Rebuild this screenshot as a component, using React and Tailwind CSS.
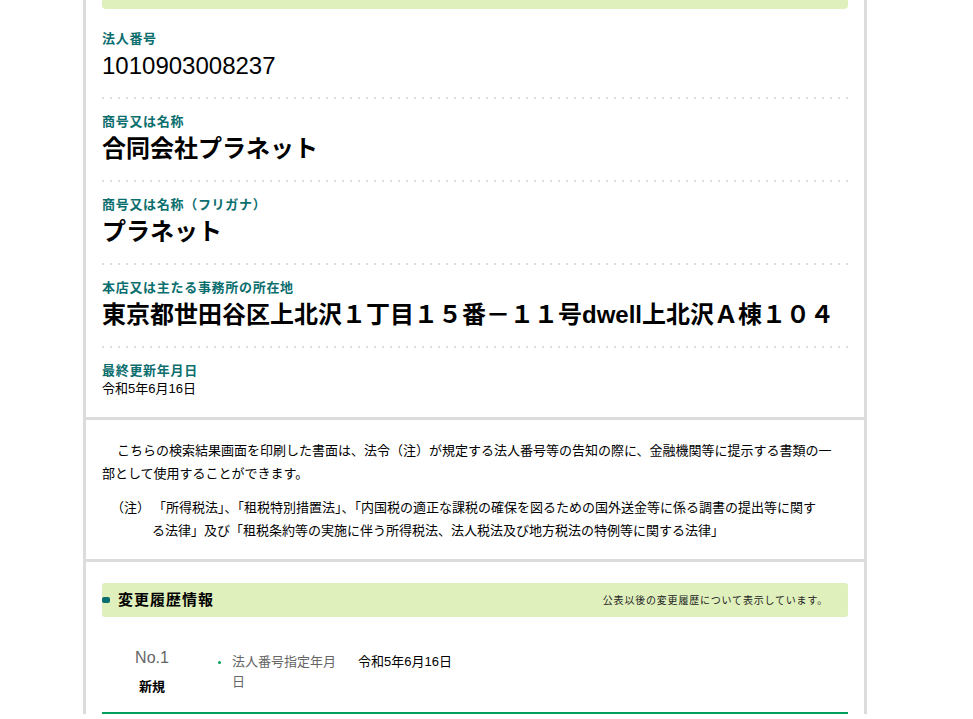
import React from "react";

const jp = { fontFamily: '"Liberation Sans", "Noto Sans CJK JP", sans-serif' };

const Dots = () => (
  <div className="h-[2px] bg-[linear-gradient(to_right,#dcdcdc_2px,transparent_2px)] bg-[length:8px_2px]" />
);

const Item = ({ label, value, big = true, bold = false, first = false, last = false }) => (
  <div>
    <div className={first ? "pt-[21px]" : "pt-[14px]"}>
      <div className="text-[13px] leading-[18px] font-bold tracking-[0.7px] text-[#0b6e6e]">{label}</div>
      {big ? (
        <div className={`mt-[2px] text-[24px] leading-[32px] text-black ${bold ? "font-bold" : ""}`}>{value}</div>
      ) : (
        <div className="text-[13px] leading-[18px] text-black">{value}</div>
      )}
    </div>
    {last ? <div className="h-[19px]" /> : <div className="h-[15px]" />}
    {!last && <Dots />}
  </div>
);

export default function App() {
  return (
    <div className="min-h-screen bg-white" style={jp}>
      <div className="ml-[83px] w-[784px] border-x-[3px] border-[#dcdcdc]">
        {/* basic info */}
        <section className="px-4 border-b-[3px] border-[#dcdcdc]">
          <div className="h-[9px] rounded-b-[4px] bg-[#dff0bc]" />
          <Item first label="法人番号" value="1010903008237" />
          <Item label="商号又は名称" value="合同会社プラネット" bold />
          <Item label="商号又は名称（フリガナ）" value="プラネット" bold />
          <Item label="本店又は主たる事務所の所在地" value="東京都世田谷区上北沢１丁目１５番－１１号dwell上北沢Ａ棟１０４" bold />
          <Item last big={false} label="最終更新年月日" value="令和5年6月16日" />
        </section>

        {/* notice */}
        <section className="px-4 pt-[19px] pb-[17px] border-b-[3px] border-[#dcdcdc] text-[13px] leading-[23px] text-black">
          <p className="indent-[15px] pr-[12px]">
            こちらの検索結果画面を印刷した書面は、法令（注）が規定する法人番号等の告知の際に、金融機関等に提示する書類の一部として使用することができます。
          </p>
          <p className="mt-[11px] pl-[50px] -indent-[41px] whitespace-nowrap">
            <span className="inline-block w-[42px] indent-0">（注）</span>
            「所得税法」、「租税特別措置法」、「内国税の適正な課税の確保を図るための国外送金等に係る調書の提出等に関す
            <br />
            る法律」及び「租税条約等の実施に伴う所得税法、法人税法及び地方税法の特例等に関する法律」
          </p>
        </section>

        {/* history */}
        <section className="px-4 pt-[21px]">
          <div className="h-[34px] flex items-center justify-between rounded-[3px] bg-[#dff0bc]">
            <div className="flex items-center">
              <span className="w-[8px] h-[6px] rounded-[2px] bg-[#0b6e6e]" />
              <span className="ml-[8px] text-[15px] font-bold tracking-[1px] text-black">変更履歴情報</span>
            </div>
            <span className="pr-[20px] text-[10px] tracking-[0.8px] text-[#222]">公表以後の変更履歴について表示しています。</span>
          </div>

          <div className="flex items-start pb-[16px] border-b-2 border-[#00a05c]">
            <div className="w-[100px] pt-[31px] text-center">
              <div className="text-[16px] leading-[20px] text-[#666]">No.1</div>
              <div className="mt-[10px] text-[13px] leading-[18px] font-bold text-black">新規</div>
            </div>
            <ul className="pt-[35px] pl-[16px]">
              <li className="flex items-start text-[13px] leading-[20px]">
                <span className="w-[14px] pt-[9px]">
                  <span className="block w-[3px] h-[3px] rounded-full bg-[#00a05c]" />
                </span>
                <span className="w-[110px] text-[#666]">法人番号指定年月日</span>
                <span className="ml-[16px] text-black">令和5年6月16日</span>
              </li>
            </ul>
          </div>
        </section>
      </div>
    </div>
  );
}
